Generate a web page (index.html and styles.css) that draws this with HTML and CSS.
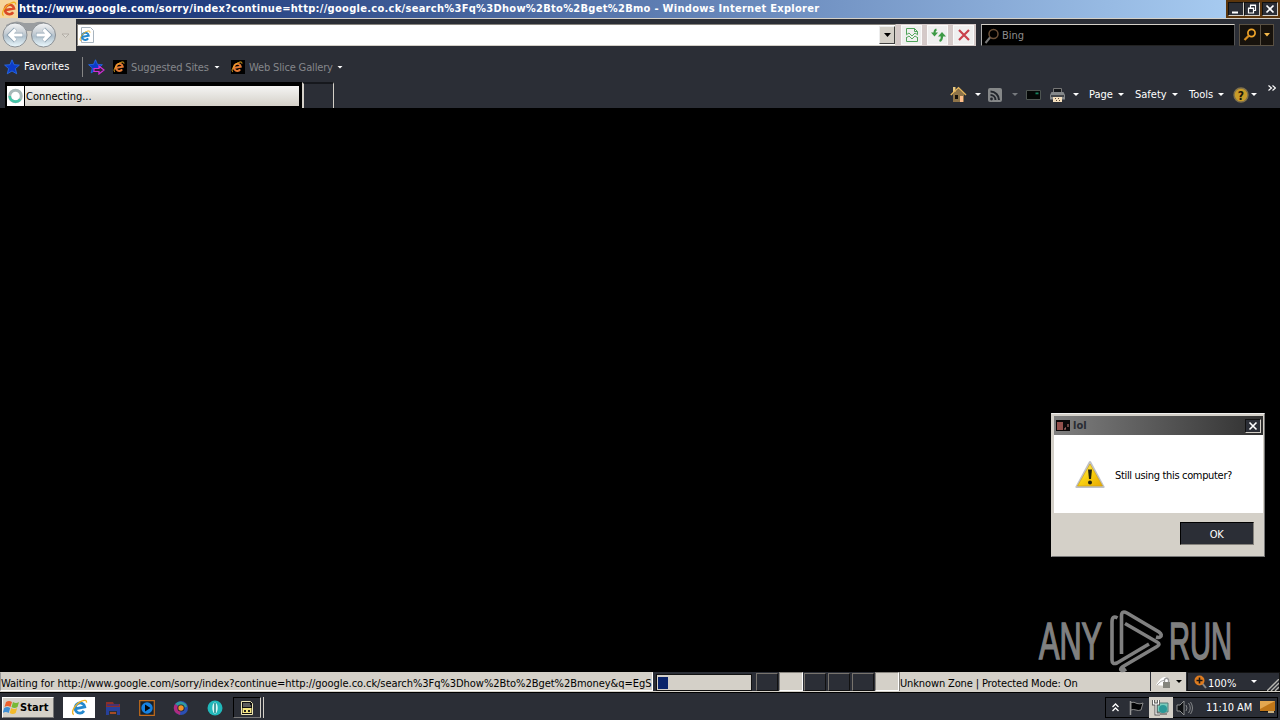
FILE: index.html
```html
<!DOCTYPE html>
<html lang="en">
<head>
  <meta charset="UTF-8" />
  <meta name="viewport" content="width=device-width, initial-scale=1.0"/>
  <title>Windows Internet Explorer</title>
  <link rel="stylesheet" href="styles.css">
</head>
<body>
  <!-- Shared icons -->
  <svg class="defs" width="0" height="0">
    <defs>
      <linearGradient id="ball" x1="0" y1="0" x2="0" y2="1">
        <stop offset="0" stop-color="#f4f5f6"/>
        <stop offset=".4" stop-color="#c9d0d6"/>
        <stop offset=".55" stop-color="#b0c0cc"/>
        <stop offset="1" stop-color="#ecfaff"/>
      </linearGradient>
      <linearGradient id="warn" x1="0" y1="0" x2="1" y2="1">
        <stop offset="0" stop-color="#fff27a"/>
        <stop offset=".5" stop-color="#f8d010"/>
        <stop offset="1" stop-color="#e8a800"/>
      </linearGradient>
      <symbol id="ie" viewBox="0 0 16 16">
        <path d="M12.2 11.200A4.600 4.800 20 1 1 13 7.500L5 9" fill="none" stroke="currentColor" stroke-width="2.6"/>
        <path d="M2.600 14.600C-.8 13 4 4.600 10 2c3-1.300 5-1 4.600 1.500" fill="none" stroke="#f0b020" stroke-width="1.300"/>
      </symbol>
      <symbol id="star" viewBox="0 0 16 16">
        <path d="M8 .8l2.100 4.900 5.300.400-4 3.500 1.300 5.200L8 12l-4.700 2.800 1.300-5.200-4-3.500 5.300-.400z" fill="#0c3cc8" stroke="#2a70f0" stroke-width=".8"/>
      </symbol>
    </defs>
  </svg>

  <!-- Title bar -->
  <div class="titlebar">
    <div class="title-icon"><svg width="16" height="16"><use href="#ie"/></svg></div>
    <div class="title-text">http://www.google.com/sorry/index?continue=http://google.co.ck/search%3Fq%3Dhow%2Bto%2Bget%2Bmo - Windows Internet Explorer</div>
    <div class="win-buttons">
      <span class="win-btn"><svg width="14" height="13"><path d="M3 9.500h6" stroke="#fff" stroke-width="2"/></svg></span>
      <span class="win-btn"><svg width="14" height="13"><path d="M5.500 5V2.500h5v5H9M3 5.500h5.500v4.500H3.500V5M5 2h6M3 5h6" fill="none" stroke="#fff" stroke-width="1.200"/></svg></span>
      <span class="win-btn last"><svg width="14" height="13"><path d="M3.500 2.500l7 7m0-7l-7 7" stroke="#fff" stroke-width="1.700"/></svg></span>
    </div>
  </div>

  <!-- Address row -->
  <div class="navbar">
    <div class="nav-buttons">
      <svg width="76" height="32">
        <path d="M6 6Q15 0 24 4h10q10-4 18 4l-2 4H8z" fill="#9a9da0"/>
        <circle cx="15" cy="16" r="12" fill="url(#ball)" stroke="#8b8f93"/>
        <circle cx="43.500" cy="16" r="12" fill="url(#ball)" stroke="#8b8f93"/>
        <path d="M23 16H10m5.500-6l-6 6 6 6" fill="none" stroke="#8fa3b3" stroke-width="4.400"/>
        <path d="M36 16h13m-5.500-6l6 6-6 6" fill="none" stroke="#8fa3b3" stroke-width="4.400"/>
        <path d="M22.500 16H10m5.500-5.500L10 16l5.500 5.500" fill="none" stroke="#fff" stroke-width="3.200"/>
        <path d="M36.500 16h12.500m-5.500-5.500L49 16l-5.500 5.500" fill="none" stroke="#fff" stroke-width="3.200"/>
        <path d="M62 15h7l-3.500 3.500z" fill="#dedbd5" stroke="#aaa59d" stroke-width=".8"/>
      </svg>
    </div>
    <div class="address">
      <svg width="16" height="16">
        <path d="M2.500.5h9l3 3v12h-12z" fill="#fff" stroke="#a9b4be"/>
        <use href="#ie" class="blue" x="0" y="3" width="12" height="12"/>
      </svg>
      <span class="combo-btn"><svg width="7" height="4"><path d="M0 0h7L3.500 4z"/></svg></span>
    </div>
    <div class="page-buttons">
      <span class="page-btn"><svg width="14" height="16"><path d="M1.500 7V1.500h8l3 3V7M1.500 10v4.500h11V10M9.500 1.500v3h3" fill="none" stroke="#4fa35a"/><path d="M1 8l3-2 3 3 3-3 3 2M1 11l3-2 3 3 3-3 3 2" fill="none" stroke="#55a860"/></svg></span>
      <span class="page-btn"><svg width="16" height="16"><path d="M6.500 2.500Q4.500 3 4.500 6" fill="none" stroke="#3c9a45" stroke-width="2"/><path d="M1 5.500h7L4.500 9.500z" fill="#3c9a45"/><path d="M9.500 14q2.500-1 2.500-5" fill="none" stroke="#3c9a45" stroke-width="2.200"/><path d="M8 9.500h8L12 5z" fill="#3c9a45"/></svg></span>
      <span class="page-btn"><svg width="14" height="14"><path d="M2 2l10 10M12 2L2 12" stroke="#c9404c" stroke-width="2.200"/></svg></span>
    </div>
    <div class="search">
      <svg width="16" height="16"><circle cx="9.500" cy="6" r="4.500" fill="none" stroke="#6b5038" stroke-width="1.500"/><path d="M6 9.500L1.500 15" stroke="#777" stroke-width="2"/></svg>
      <span>Bing</span>
    </div>
    <div class="search-go">
      <span class="go"><svg width="14" height="14"><circle cx="8.500" cy="5" r="3.600" fill="none" stroke="#f0a52a" stroke-width="1.700"/><path d="M6 7.500L1.500 12" stroke="#d88f20" stroke-width="2.300"/></svg></span>
      <span class="go-drop"><svg width="6" height="4"><path d="M0 0h6L3 3.500z" fill="#f5b84a"/></svg></span>
    </div>
  </div>

  <!-- Favorites bar -->
  <div class="favorites">
    <svg width="16" height="16"><use href="#star"/></svg>
    <span class="fav-label">Favorites</span>
    <svg class="fav-add" width="18" height="16"><use href="#star" width="15" height="15"/><path d="M6 9.500h5V7l5 4-5 4v-2.500H6z" fill="#38203c" stroke="#d22fd8" stroke-width="1.200"/></svg>
    <span class="fav-icon"><svg width="14" height="14"><use href="#ie" y="1" width="12" height="12"/></svg></span>
    <span class="fav-link sites">Suggested Sites</span>
    <i class="arrow"></i>
    <span class="fav-icon second"><svg width="14" height="14"><use href="#ie" y="1" width="12" height="12"/></svg></span>
    <span class="fav-link slices">Web Slice Gallery</span>
    <i class="arrow"></i>
  </div>

  <!-- Tabs and command bar -->
  <div class="tabrow">
    <div class="tab">
      <span class="tab-icon"><svg width="16" height="18"><circle cx="8.500" cy="9" r="5.800" fill="none" stroke="#a9b9b9" stroke-width="3"/><path d="M2.700 9a5.800 5.800 0 0 0 10.500 3.200" fill="none" stroke="#43c5a8" stroke-width="2.600"/></svg></span>
      <span class="tab-title">Connecting...</span>
    </div>
    <div class="new-tab"></div>
    <div class="commands">
      <svg class="home" width="17" height="17"><path d="M3 8v8h11V8L8.500 3z" fill="#8f7448"/><path d="M3 1h2.500v5H3z" fill="#e8c880"/><path d="M.8 9L8.500 1.800 16 9" fill="none" stroke="#e5b55c" stroke-width="1.500"/><path d="M5 9h3v4H5z" fill="#17120c"/><path d="M10 10h3v6h-3z" fill="#ffbd8c"/></svg>
      <i class="arrow"></i>
      <svg class="feed" width="14" height="14"><rect width="14" height="14" rx="2" fill="#858788"/><path d="M2.500 7a5 5 0 0 1 5 5M2.500 3.500A8.500 8.500 0 0 1 11 12" fill="none" stroke="#22262c" stroke-width="2"/><circle cx="3.500" cy="11" r="1.400" fill="#22262c"/></svg>
      <i class="arrow dim"></i>
      <svg class="mail" width="15" height="10"><path d="M.5.5h14v9H.5z" fill="#050807" stroke="#4e5552"/><path d="M9.500 2.500h3v1.800h-3z" fill="#16845f"/></svg>
      <svg class="print" width="17" height="16"><path d="M4.500 5V1.500h8V5" fill="#16181b" stroke="#777"/><path d="M2.500 5h12L16 8v4.500H1V8z" fill="#85888a"/><path d="M2 8h13v2H2z" fill="#44474b"/><path d="M4 10h9v5H4z" fill="#f5dfbd"/><path d="M6 11.500h1m2 0h1m-3 2h1m2 0h1" stroke="#5b4a38"/></svg>
      <i class="arrow"></i>
      <span class="cmd page">Page</span><i class="arrow"></i>
      <span class="cmd safety">Safety</span><i class="arrow"></i>
      <span class="cmd tools">Tools</span><i class="arrow"></i>
      <svg class="help" width="16" height="16"><circle cx="8" cy="8" r="7" fill="#c99c28" stroke="#80714c" stroke-width="1.400"/><text x="8" y="12.500" text-anchor="middle" class="help-mark">?</text></svg>
      <i class="arrow help-arrow"></i>
      <svg class="more" width="8" height="7"><path d="M.5.500l3 2.500-3 2.500M4.500.500l3 2.500-3 2.500" fill="none" stroke="#fff" stroke-width="1.200"/></svg>
    </div>
  </div>

  <div class="content">
    <!-- Message box -->
    <div class="dialog">
      <div class="dialog-title">
        <svg width="14" height="11"><path d="M0 0h14v11H0z" fill="#0b0708"/><path d="M1 2h6v8H1z" fill="#94504c"/><path d="M9 8h1m2-4v3M8 9h2" stroke="#c9807a"/></svg>
        <span class="dialog-name">lol</span>
        <span class="win-btn dialog-close"><svg width="14" height="13"><path d="M3.500 2.500l7 7m0-7l-7 7" stroke="#fff" stroke-width="1.600"/></svg></span>
      </div>
      <div class="dialog-body">
        <svg width="32" height="30"><path d="M15 1.500q1-1 2 0l13.500 25q.5 1.500-1 1.500h-27q-1.500 0-1-1.500z" fill="#bfc1c6"/><path d="M16 4L28.500 26h-25z" fill="url(#warn)" stroke="#d3a413" stroke-width=".7"/><path d="M14 9.500h4L17 19h-2z" fill="#24240e"/><circle cx="16" cy="22.500" r="2" fill="#24240e"/></svg>
        <span class="dialog-text">Still using this computer?</span>
      </div>
      <div class="dialog-footer"><button class="ok">OK</button></div>
    </div>

    <!-- Watermark -->
    <div class="watermark">
      <span class="any">ANY</span>
      <svg width="56" height="64" viewBox="0 0 56 64">
        <path d="M8.500 9Q3 6 3 13v38q0 5 5 3l32-19" fill="none" stroke="#808080" stroke-width="3.600"/>
        <path d="M12.500 45V7q0-6 5.500-3l32 19q4 3 1 5-1 1-4 0" fill="none" stroke="#808080" stroke-width="3.600"/>
        <path d="M16 14.500l32 18.500q4 2 0 4.500L14 57.500q-4 3-1 4 2 0 4-1.500" fill="none" stroke="#808080" stroke-width="3.600"/>
      </svg>
      <span class="run">RUN</span>
    </div>
  </div>

  <!-- Status bar -->
  <div class="statusbar">
    <div class="status-text"><span>Waiting for http://www.google.com/sorry/index?continue=http://google.co.ck/search%3Fq%3Dhow%2Bto%2Bget%2Bmoney&amp;q=EgS</span></div>
    <div class="progress"><div class="progress-bar"></div></div>
    <div class="pane"></div>
    <div class="pane light"></div>
    <div class="pane"></div>
    <div class="pane"></div>
    <div class="pane"></div>
    <div class="pane light"></div>
    <div class="zone"><span>Unknown Zone | Protected Mode: On</span></div>
    <div class="protect">
      <svg width="18" height="16"><path d="M1 11q5-9 10-8l3 5-3 4z" fill="#fff"/><path d="M2 11q4-5 8-5" fill="none" stroke="#aaa"/><path d="M8 8h7v6H8z" fill="#85857d"/><path d="M9.500 8V5.500q2-2.500 4 0V8" fill="none" stroke="#999" stroke-width="1.300"/></svg>
      <i class="arrow black"></i>
    </div>
    <div class="zoom">
      <svg width="13" height="14"><path d="M8 8l4 5" stroke="#888" stroke-width="2"/><circle cx="5.500" cy="5.500" r="5" fill="#df7c20"/><path d="M5.500 2.500v6m-3-3h6" stroke="#191512" stroke-width="1.600"/></svg>
      <span class="zoom-text">100%</span>
      <i class="arrow"></i>
      <svg class="grip" width="12" height="12"><path d="M0 12L12 0M4 12l8-8M8 12l4-4" stroke="#b8b7b2" stroke-width="1.400"/></svg>
    </div>
  </div>

  <!-- Taskbar -->
  <div class="taskbar">
    <div class="start">
      <svg width="17" height="16"><path d="M3 2q3-2 6 0L7.500 7q-3-2-6 0z" fill="#ed602d"/><path d="M10 2q3 2 6 0l-1.500 5q-3 2-6 0z" fill="#77b935"/><path d="M1.200 8q3-2 6 0l-1.500 5q-3-2-6 0z" fill="#3e8ed4"/><path d="M8.200 8q3 2 6 0l-1.500 5q-3 2-6 0z" fill="#f2ba2b"/></svg>
      <span>Start</span>
    </div>
    <div class="task active"><svg width="17" height="17"><use href="#ie" class="blue"/></svg></div>
    <div class="task"><svg width="16" height="16"><path d="M1 2h7l1 2h6v3H1z" fill="#8c3028"/><path d="M2 4h12v2H2z" fill="#4a3170"/><path d="M1 7h14v8h-3v-4H4v4H1z" fill="#26409a"/><path d="M5 12h6v2H5z" fill="#a64b24"/></svg></div>
    <div class="task"><svg width="16" height="16"><path d="M.7.700h14.600v14.600H.7z" fill="#17202a" stroke="#c46c1b" stroke-width="1.200"/><circle cx="8" cy="8" r="5.700" fill="#1682e2"/><path d="M6 4.500v7L11.500 8z" fill="#05080b"/></svg></div>
    <div class="task"><svg width="16" height="16"><circle cx="8" cy="8" r="7" fill="#2a4fb4"/><path d="M8 8L2 4q5-5 11 0l1 3z" fill="#2f9aa0"/><path d="M8 8L2 4q-3 5 1 9l4 2z" fill="#b02a80"/><circle cx="8" cy="8" r="3.600" fill="#1c2430"/><circle cx="8" cy="8" r="2.700" fill="#f19227"/></svg></div>
    <div class="task"><svg width="16" height="16"><circle cx="8" cy="8" r="7.500" fill="#20b8bb"/><ellipse cx="8" cy="8" rx="2.700" ry="5.500" fill="#d8f8f4"/><path d="M8 3v10" stroke="#157d83" stroke-width="1.500"/></svg></div>
    <div class="task pressed"><svg width="14" height="16"><path d="M1.500 1.500h9l2 2v11h-11z" fill="#101010" stroke="#eee6b4"/><path d="M3 4h7M3 6h8" stroke="#aaa"/><path d="M2.500 8h9v5h-9z" fill="#f7e780"/><path d="M4 10h2v2H4zM8 10h2v2H8z" fill="#222"/></svg></div>
    <div class="tray">
      <svg class="chevrons" width="7" height="9"><path d="M.5 4l3-3 3 3M.5 8l3-3 3 3" fill="none" stroke="#fff" stroke-width="1.300"/></svg>
      <svg class="flag" width="17" height="16"><path d="M2.500 1v14" stroke="#999" stroke-width="1.500"/><path d="M3 2.500q3-1 6 1 3 1 6-.500l-2 7q-3 1-5 0-3-1-5 0z" fill="#030405" stroke="#8b8b8b"/></svg>
      <span class="network"><svg width="17" height="17"><path d="M5 4h11v9H5z" fill="#79cdbd" stroke="#527b78"/><circle cx="11" cy="10" r="4" fill="#2b9998"/><path d="M8 15h7" stroke="#444"/><path d="M1.500 1v4h5V1M4 5v10h4" fill="none" stroke="#555" stroke-width="3"/><path d="M1.500 1v4h5V1M4 5v10h4" fill="none" stroke="#fff" stroke-width="1.200"/></svg></span>
      <svg class="sound" width="17" height="16"><path d="M1 5h3l4-4v14l-4-4H1z" fill="#0d0f11" stroke="#8d8f90"/><path d="M10 5q2 3 0 6M12.500 3q3.500 5 0 10M14.500 2q4 6 0 12" fill="none" stroke="#858789"/></svg>
      <span class="clock">11:10 AM</span>
      <svg class="desktop" width="15" height="13"><path d="M0 0h15v10H0z" fill="#c07618"/><path d="M0 0h15L0 8z" fill="#e4a750"/><path d="M0 10h15v1H0z" fill="#141414"/><path d="M8 11h6" stroke="#c8b080" stroke-width="2"/></svg>
    </div>
  </div>
</body>
</html>
```
FILE: styles.css
```css
* {
  box-sizing: border-box;
}
body {
  margin: 0;
  width: 1280px;
  height: 720px;
  overflow: hidden;
  display: flex;
  flex-direction: column;
  background: #2b2e36;
  color: #fff;
  font: 11px "DejaVu Sans Condensed", "DejaVu Sans", sans-serif;
  font-stretch: condensed;
  white-space: nowrap;
}
svg {
  display: block;
  flex: none;
}
.defs {
  position: absolute;
}
.blue {
  color: #2488ce;
}
.arrow {
  flex: none;
  width: 6px;
  height: 3px;
  margin: 0 -1px 0 0;
  background: #fff;
  clip-path: polygon(0 0, 100% 0, 50% 100%);
}
.arrow.dim {
  background: #777a7e;
}
.arrow.black {
  background: #000;
}

/* title bar */
.titlebar {
  height: 19px;
  flex: none;
  display: flex;
  background: linear-gradient(90deg, #0a246a, #a6caf0 1225px);
  border-bottom: 1px solid #d4d0c8;
}
.title-icon {
  width: 18px;
  padding: 1px;
  background: #f6d59b;
  color: #d94a26;
}
.title-text {
  flex: 1;
  padding-left: 1px;
  line-height: 18px;
  font-weight: bold;
  letter-spacing: 0.29px;
}
.win-buttons {
  width: 54px;
  padding: 2px 2px 0 2px;
  display: flex;
  background: #5b350c;
}
.win-btn {
  width: 16px;
  height: 14px;
  background: #2b2e36;
  border: 1px solid;
  border-color: #111 #d4d0c8 #d4d0c8 #111;
}
.win-btn.last {
  margin-left: 2px;
}

/* address row */
.navbar {
  height: 33px;
  flex: none;
  display: flex;
}
.nav-buttons {
  width: 76px;
  height: 32px;
  background: #d4d0c8;
}
.address {
  width: 819px;
  height: 22px;
  margin: 5px 0 0 1px;
  padding: 1px 0 1px 1px;
  display: flex;
  justify-content: space-between;
  align-items: center;
  background: #fff;
  border: 1px solid;
  border-color: #85827c #d4d0c8 #d4d0c8 #85827c;
}
.combo-btn {
  width: 16px;
  height: 18px;
  display: flex;
  align-items: center;
  justify-content: center;
  background: #d4d0c8;
  border: 1px solid;
  border-color: #eee #404040 #404040 #eee;
}
.page-buttons {
  width: 80px;
  height: 22px;
  margin-top: 5px;
  padding: 1px 1px 1px 5px;
  display: flex;
  gap: 5px;
  background: #d4c9c8;
}
.page-btn {
  width: 21px;
  display: flex;
  align-items: center;
  justify-content: center;
  background: #efefef;
  border: 1px solid #fafafa;
}
.search {
  width: 254px;
  height: 22px;
  margin: 5px 0 0 5px;
  padding: 1px 0 0 2px;
  display: flex;
  align-items: center;
  gap: 2px;
  background: #000;
  color: #8c8c8c;
  border: 1px solid;
  border-color: #d4d0c8 #555 #222 #aaa;
}
.search-go {
  width: 35px;
  height: 22px;
  margin: 5px 0 0 4px;
  display: flex;
  background: #17120c;
  border: 1px solid #5a5143;
}
.go,
.go-drop {
  display: flex;
  align-items: center;
  justify-content: center;
}
.go {
  width: 21px;
  border-right: 1px solid #5a5143;
}
.go-drop {
  flex: 1;
}

/* favorites */
.favorites {
  height: 30px;
  flex: none;
  display: flex;
  align-items: center;
  padding-left: 4px;
}
.fav-label {
  width: 59px;
  height: 20px;
  line-height: 19px;
  margin: 0 5px 0 4px;
  border-right: 1px solid #858585;
  letter-spacing: 0.1px;
}
.fav-icon {
  width: 14px;
  height: 14px;
  margin-left: 7px;
  background: #000;
  color: #e57a35;
}
.fav-icon.second {
  margin-left: 12px;
}
.fav-link {
  margin-left: 4px;
  color: #85878b;
  letter-spacing: -0.15px;
}
.sites {
  width: 83px;
}
.slices {
  width: 88px;
}

/* tabs */
.tabrow {
  height: 26px;
  flex: none;
  display: flex;
}
.tab {
  width: 297px;
  height: 26px;
  margin-left: 5px;
  padding: 4px 3px 2px 2px;
  display: flex;
  background: #000;
}
.tab-icon {
  width: 17px;
  padding-top: 1px;
  background: #fff;
}
.tab-title {
  flex: 1;
  margin-left: 1px;
  padding-left: 1px;
  line-height: 21px;
  color: #000;
  background: linear-gradient(#f5f5f4, #d4d0c8);
}
.new-tab {
  width: 32px;
  margin: 0;
  border: solid;
  border-width: 2px 1px 0 2px;
  border-color: #16181d #d4d0c8 #111 #d4d0c8;
}
.commands {
  flex: 1;
  display: flex;
  align-items: center;
  padding-left: 616px;
  height: 25px;
}
.home {
  margin-right: 8px;
}
.feed {
  margin: 0 10px 0 8px;
}
.mail {
  margin: 0 8px 0 9px;
}
.print {
  margin-right: 7px;
}
.cmd {
  margin-left: 11px;
}
.page {
  width: 29px;
}
.safety {
  width: 37px;
  margin-left: 12px;
}
.tools {
  width: 29px;
  margin-left: 12px;
}
.help {
  margin: 0 2px 0 10px;
}
.help-mark {
  font-size: 12px;
  font-weight: bold;
  fill: #1b1609;
}
.more {
  margin: -12px 0 0 12px;
}

/* page area */
.content {
  position: relative;
  flex: 1;
  background: #000;
}
.dialog {
  position: absolute;
  left: 1051px;
  top: 305px;
  width: 214px;
  height: 144px;
  padding: 2px 1px 2px 2px;
  display: flex;
  flex-direction: column;
  background: #d4d0c8;
  border: 1px solid;
  border-color: #eee #777 #777 #d4d0c8;
}
.dialog-title {
  height: 19px;
  flex: none;
  display: flex;
  align-items: center;
  padding: 0 2px;
  background: linear-gradient(90deg, #7f7f7f, #303030);
}
.dialog-name {
  flex: 1;
  margin-left: 3px;
  font-weight: bold;
  color: #292c33;
}
.dialog-body {
  height: 78px;
  padding: 2px 0 0 20px;
  display: flex;
  align-items: center;
  gap: 9px;
  background: #fff;
  color: #000;
}
.dialog-text {
  letter-spacing: -0.33px;
}
.dialog-footer {
  flex: 1;
  padding: 9px 9px 9px 8px;
  display: flex;
  justify-content: flex-end;
}
.ok {
  width: 74px;
  height: 23px;
  padding: 1px 1px 0 0;
  font: inherit;
  letter-spacing: -0.3px;
  color: #fff;
  background: #2b2e36;
  border: 1px solid;
  border-color: #000 #85827c #85827c #000;
}
.watermark {
  position: absolute;
  left: 1039px;
  top: 501px;
  display: flex;
  align-items: center;
  font: 52px "Liberation Sans Narrow", "Liberation Sans", sans-serif;
  line-height: 64px;
  color: #808080;
  -webkit-text-stroke: 1.6px #808080;
}
.any,
.run {
  transform-origin: 0 50%;
}
.any {
  width: 70px;
  transform: scaleX(.59);
}
.run {
  width: 62px;
  margin-left: 4px;
  transform: scaleX(.56);
}

/* status bar */
.statusbar {
  height: 20px;
  flex: none;
  display: flex;
  color: #000;
  border-bottom: 1px solid #d4d0c8;
}
.status-text {
  width: 653px;
  line-height: 21px;
  letter-spacing: -0.045px;
  background: #d4d0c8;
  border: 1px solid;
  border-color: #d4d0c8 #fff #fff #999;
}
.progress {
  width: 96px;
  height: 17px;
  margin: 2px 3px 0 3px;
  padding: 2px 1px;
  background: #d4d0c8;
  border: 1px solid #111;
}
.progress-bar {
  width: 10px;
  height: 12px;
  background: #0a246a;
}
.pane {
  width: 22px;
  height: 18px;
  margin: 1px 1px 0;
  border: 1px solid;
  border-color: #77736d #111 #111 #77736d;
}
.pane.light {
  width: 24px;
  height: 19px;
  margin: 0;
  background: #d4d0c8;
  border-color: #85827c #fff #fff #85827c;
}
.zone {
  width: 251px;
  line-height: 23px;
  letter-spacing: -0.13px;
  background: #d4d0c8;
  border-left: 1px solid #85827c;
}
.protect {
  width: 35px;
  margin-left: 1px;
  padding: 1px 5px 1px 4px;
  display: flex;
  align-items: center;
  justify-content: space-between;
  background: #d4d0c8;
}
.zoom {
  flex: 1;
  margin-left: 1px;
  padding-left: 6px;
  display: flex;
  align-items: center;
  color: #fff;
  border: 1px solid #111;
}
.zoom-text {
  width: 43px;
  padding-top: 3px;
  margin-left: 1px;
}
.grip {
  margin: 7px 0 0 11px;
}

/* taskbar */
.taskbar {
  height: 28px;
  flex: none;
  display: flex;
  padding-top: 4px;
  border-top: 1px solid #000;
}
.start {
  width: 52px;
  height: 21px;
  margin-left: 2px;
  display: flex;
  align-items: center;
  background: #d4d0c8;
  color: #000;
  font-weight: bold;
  letter-spacing: 0.1px;
  border: 1px solid;
  border-color: #fff #777 #777 #fff;
}
.task {
  width: 32px;
  height: 21px;
  margin-right: 2px;
  display: flex;
  align-items: center;
  justify-content: center;
}
.task.active {
  margin-left: 9px;
  background: #fff;
}
.task.pressed {
  width: 28px;
  border: 1px solid;
  border-color: #000 #d4d0c8 #777 #000;
  box-shadow: 2px 0 #2b2e36, 3px 0 #d4d0c8;
}
.tray {
  width: 173px;
  height: 21px;
  margin: 0 2px 0 auto;
  padding-left: 6px;
  display: flex;
  align-items: center;
  border: 1px solid #000;
}
.flag {
  margin-left: 9px;
}
.network {
  width: 24px;
  height: 21px;
  margin-left: 4px;
  padding: 2px 3px;
  background: #d4d0c8;
}
.sound {
  margin-left: 3px;
}
.clock {
  width: 49px;
  margin-left: 13px;
  letter-spacing: -0.1px;
}
.desktop {
  margin-left: 5px;
}
```
